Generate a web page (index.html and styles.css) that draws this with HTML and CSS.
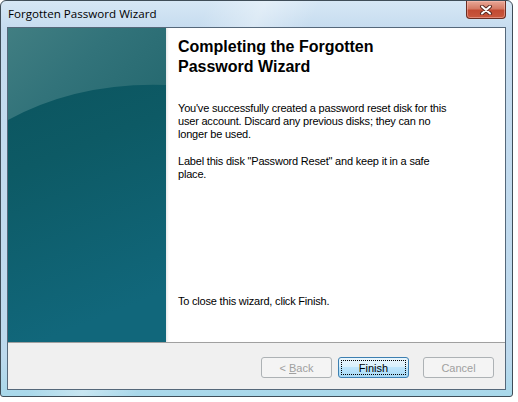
FILE: index.html
```html
<!DOCTYPE HTML>
<html lang="en">

<head>
  <meta charset="utf-8">
  <title>Forgotten Password Wizard</title>
  <link rel="stylesheet" href="styles.css">
</head>

<body>
  <div class="window">
    <div class="titlebar">
      <span class="title">Forgotten Password Wizard</span>
      <button type="button" class="close-button" aria-label="Close">
        <svg width="14" height="10" viewBox="0 0 14 10">
          <path d="M3 1.5 L11 8.5 M11 1.5 L3 8.5" stroke="#5a2a22" stroke-width="4" stroke-linecap="round" />
          <path d="M3 1.5 L11 8.5 M11 1.5 L3 8.5" stroke="#fff" stroke-width="2" stroke-linecap="round" />
        </svg>
      </button>
    </div>

    <div class="client">
      <div class="wizard_main">
        <div class="banner">
          <svg width="158" height="314" viewBox="0 0 158 314">
            <defs>
              <linearGradient id="bannerBase" x1="0" y1="0" x2="0.2" y2="1">
                <stop offset="0" stop-color="#0b525c" />
                <stop offset="0.45" stop-color="#0d5a65" />
                <stop offset="1" stop-color="#11677b" />
              </linearGradient>
              <linearGradient id="bannerTop" x1="0" y1="0" x2="1" y2="0.6">
                <stop offset="0" stop-color="#417e82" />
                <stop offset="0.5" stop-color="#32737a" />
                <stop offset="1" stop-color="#276a71" />
              </linearGradient>
            </defs>
            <rect width="158" height="314" fill="url(#bannerBase)" />
            <path d="M0 0 H158 V57 Q 70 54 0 92 Z" fill="url(#bannerTop)" />
          </svg>
        </div>

        <div class="content">
          <h1>Completing the Forgotten Password Wizard</h1>
          <p>You've successfully created a password reset disk for this user account. Discard any previous disks; they
            can no longer be used.</p>
          <p>Label this disk "Password Reset" and keep it in a safe place.</p>
          <p class="closing">To close this wizard, click Finish.</p>
        </div>
      </div>

      <div class="footer">
        <button type="button" class="wizard-button" disabled>&lt; <u>B</u>ack</button>
        <button type="button" class="wizard-button button-default">Finish</button>
        <button type="button" class="wizard-button button-cancel" disabled>Cancel</button>
      </div>
    </div>
  </div>
</body>

</html>
```

FILE: styles.css
```css
body {
  margin: 0;
  padding: 0;
  background-color: #fff;
  font-family: "Liberation Sans", Arial, sans-serif;
}

.window {
  box-sizing: border-box;
  width: 513px;
  height: 397px;
  display: flex;
  flex-direction: column;
  padding: 0 6px 6px 6px;
  border: 1px solid #3f4d58;
  border-radius: 6px 6px 3px 3px;
  background:
    linear-gradient(115deg, rgba(255, 255, 255, 0) 30%, rgba(255, 255, 255, 0.35) 38%, rgba(255, 255, 255, 0) 46%),
    linear-gradient(180deg, #d6e7f5 0%, #c6dcef 7%, #bdd9ed 90%, #a8d8ea 100%);
}

/* Title bar */
.titlebar {
  height: 26px;
  display: flex;
  flex-direction: row;
  align-items: flex-start;
  padding-left: 1px;
}

.title {
  font-family: "Open Sans", "Noto Sans", sans-serif;
  font-size: 11.6px;
  line-height: 16px;
  margin-top: 5px;
  color: #000;
}

.close-button {
  margin-left: auto;
  margin-right: 0;
  width: 40px;
  height: 18px;
  padding: 0;
  display: flex;
  align-items: center;
  justify-content: center;
  border: 1px solid #6a2d22;
  border-top: none;
  border-radius: 0 0 4px 4px;
  background: linear-gradient(180deg, #e9a897 0%, #d57a65 45%, #c24a32 55%, #c9583e 100%);
  box-shadow: inset 0 0 0 1px rgba(255, 200, 190, 0.45);
}

/* Client area */
.client {
  flex: 1;
  display: flex;
  flex-direction: column;
  border: 1px solid #55687a;
  background-color: #fff;
}

.wizard_main {
  height: 314px;
  display: flex;
  flex-direction: row;
}

.banner {
  width: 158px;
  height: 314px;
  flex-shrink: 0;
}

.banner svg {
  display: block;
}

.content {
  flex: 1;
  display: flex;
  flex-direction: column;
  padding: 9px 20px 34px 12px;
  box-shadow: inset 3px 0 3px -2px rgba(0, 0, 0, 0.12);
}

.content h1 {
  margin: 0;
  width: 240px;
  font-size: 16px;
  line-height: 20px;
  font-weight: bold;
  color: #000;
}

.content p {
  margin: 0;
  width: 280px;
  font-size: 11px;
  line-height: 13px;
  letter-spacing: -0.2px;
  color: #000;
}

.content h1 + p {
  margin-top: 25px;
}

.content p + p {
  margin-top: 14px;
}

.content .closing {
  margin-top: auto;
}

/* Footer buttons */
.footer {
  flex: 1;
  display: flex;
  flex-direction: row;
  justify-content: flex-end;
  align-items: flex-start;
  padding: 14px 11px 0 0;
  border-top: 1px solid #a0a0a0;
  background-color: #f0f0f0;
}

.wizard-button {
  box-sizing: border-box;
  width: 71px;
  height: 21px;
  padding: 0;
  margin-left: 6px;
  font-family: "Liberation Sans", Arial, sans-serif;
  font-size: 11px;
  border: 1px solid #adb2b5;
  border-radius: 3px;
  background-color: #f4f4f4;
  color: #a0a0a0;
}

.wizard-button u {
  text-decoration: underline;
}

.button-default {
  color: #000;
  border-color: #3c7fb1;
  background: linear-gradient(180deg, #eaf6fd 0%, #d9f0fc 45%, #bee6fd 50%, #a7d9f5 100%);
  outline: 1px dotted #000;
  outline-offset: -4px;
}

.button-cancel {
  margin-left: 14px;
}
```
